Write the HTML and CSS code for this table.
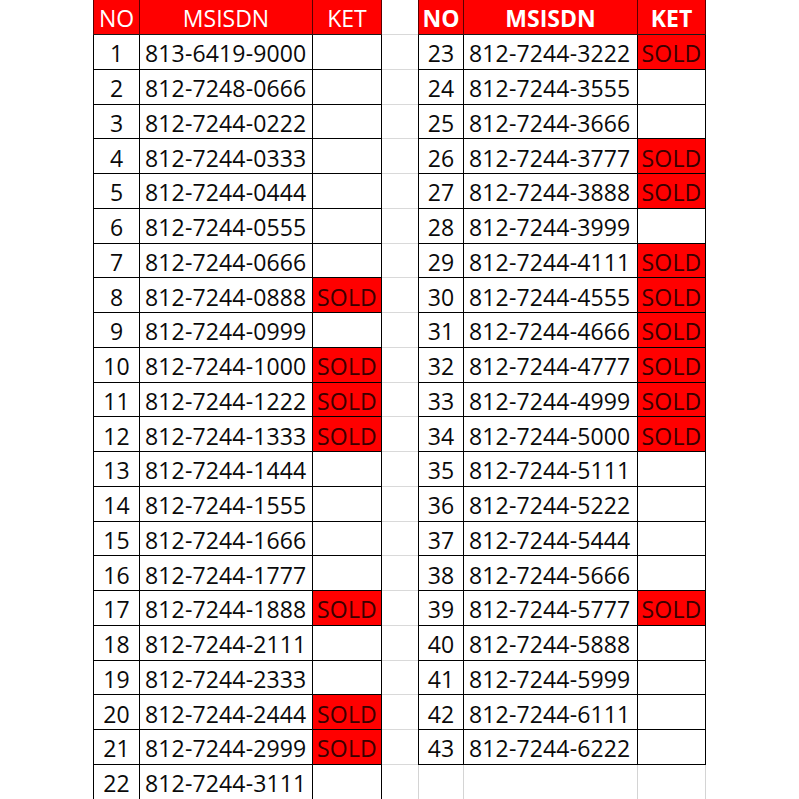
FILE: index.html
```html
<!DOCTYPE html>
<html lang="id">
<head>
<meta charset="utf-8">
<title>MSISDN</title>
<link rel="stylesheet" href="styles.css">
</head>
<body>
<div class="sheet">
  <div class="c hd first no">NO</div><div class="c hd">MSISDN</div><div class="c hd">KET</div><div class="gap"></div><div class="c hd hb first">NO</div><div class="c hd hb">MSISDN</div><div class="c hd hb">KET</div>

  <div class="c first no">1</div><div class="c ms">813-6419-9000</div><div class="c ket"></div><div class="gap"></div><div class="c first no">23</div><div class="c ms">812-7244-3222</div><div class="c ket sold">SOLD</div>
  <div class="c first no">2</div><div class="c ms">812-7248-0666</div><div class="c ket"></div><div class="gap"></div><div class="c first no">24</div><div class="c ms">812-7244-3555</div><div class="c ket"></div>
  <div class="c first no">3</div><div class="c ms">812-7244-0222</div><div class="c ket"></div><div class="gap"></div><div class="c first no">25</div><div class="c ms">812-7244-3666</div><div class="c ket"></div>
  <div class="c first no">4</div><div class="c ms">812-7244-0333</div><div class="c ket"></div><div class="gap"></div><div class="c first no">26</div><div class="c ms">812-7244-3777</div><div class="c ket sold">SOLD</div>
  <div class="c first no">5</div><div class="c ms">812-7244-0444</div><div class="c ket"></div><div class="gap"></div><div class="c first no">27</div><div class="c ms">812-7244-3888</div><div class="c ket sold">SOLD</div>
  <div class="c first no">6</div><div class="c ms">812-7244-0555</div><div class="c ket"></div><div class="gap"></div><div class="c first no">28</div><div class="c ms">812-7244-3999</div><div class="c ket"></div>
  <div class="c first no">7</div><div class="c ms">812-7244-0666</div><div class="c ket"></div><div class="gap"></div><div class="c first no">29</div><div class="c ms">812-7244-4111</div><div class="c ket sold">SOLD</div>
  <div class="c first no">8</div><div class="c ms">812-7244-0888</div><div class="c ket sold">SOLD</div><div class="gap"></div><div class="c first no">30</div><div class="c ms">812-7244-4555</div><div class="c ket sold">SOLD</div>
  <div class="c first no">9</div><div class="c ms">812-7244-0999</div><div class="c ket"></div><div class="gap"></div><div class="c first no">31</div><div class="c ms">812-7244-4666</div><div class="c ket sold">SOLD</div>
  <div class="c first no">10</div><div class="c ms">812-7244-1000</div><div class="c ket sold">SOLD</div><div class="gap"></div><div class="c first no">32</div><div class="c ms">812-7244-4777</div><div class="c ket sold">SOLD</div>
  <div class="c first no">11</div><div class="c ms">812-7244-1222</div><div class="c ket sold">SOLD</div><div class="gap"></div><div class="c first no">33</div><div class="c ms">812-7244-4999</div><div class="c ket sold">SOLD</div>
  <div class="c first no">12</div><div class="c ms">812-7244-1333</div><div class="c ket sold">SOLD</div><div class="gap"></div><div class="c first no">34</div><div class="c ms">812-7244-5000</div><div class="c ket sold">SOLD</div>
  <div class="c first no">13</div><div class="c ms">812-7244-1444</div><div class="c ket"></div><div class="gap"></div><div class="c first no">35</div><div class="c ms">812-7244-5111</div><div class="c ket"></div>
  <div class="c first no">14</div><div class="c ms">812-7244-1555</div><div class="c ket"></div><div class="gap"></div><div class="c first no">36</div><div class="c ms">812-7244-5222</div><div class="c ket"></div>
  <div class="c first no">15</div><div class="c ms">812-7244-1666</div><div class="c ket"></div><div class="gap"></div><div class="c first no">37</div><div class="c ms">812-7244-5444</div><div class="c ket"></div>
  <div class="c first no">16</div><div class="c ms">812-7244-1777</div><div class="c ket"></div><div class="gap"></div><div class="c first no">38</div><div class="c ms">812-7244-5666</div><div class="c ket"></div>
  <div class="c first no">17</div><div class="c ms">812-7244-1888</div><div class="c ket sold">SOLD</div><div class="gap"></div><div class="c first no">39</div><div class="c ms">812-7244-5777</div><div class="c ket sold">SOLD</div>
  <div class="c first no">18</div><div class="c ms">812-7244-2111</div><div class="c ket"></div><div class="gap"></div><div class="c first no">40</div><div class="c ms">812-7244-5888</div><div class="c ket"></div>
  <div class="c first no">19</div><div class="c ms">812-7244-2333</div><div class="c ket"></div><div class="gap"></div><div class="c first no">41</div><div class="c ms">812-7244-5999</div><div class="c ket"></div>
  <div class="c first no">20</div><div class="c ms">812-7244-2444</div><div class="c ket sold">SOLD</div><div class="gap"></div><div class="c first no">42</div><div class="c ms">812-7244-6111</div><div class="c ket"></div>
  <div class="c first no">21</div><div class="c ms">812-7244-2999</div><div class="c ket sold">SOLD</div><div class="gap"></div><div class="c first no">43</div><div class="c ms">812-7244-6222</div><div class="c ket"></div>
  <div class="c first no">22</div><div class="c ms">812-7244-3111</div><div class="c ket"></div><div class="gap"></div><div class="c first empty"></div><div class="c empty"></div><div class="c empty"></div>
</div>
</body>
</html>
```
FILE: styles.css
```css
html, body {
  margin: 0;
  padding: 0;
  background: #ffffff;
}

body {
  width: 799px;
  height: 799px;
  overflow: hidden;
}

.sheet {
  display: grid;
  grid-template-columns: 47px 173px 69px 36px 46px 174px 68px;
  grid-template-rows: 35px repeat(22, 34.75px);
  padding-left: 93px;
  font-family: "Open Sans", "Noto Sans", sans-serif;
  font-size: 23px;
  color: #0a0a0a;
}

.c {
  box-sizing: border-box;
  border-right: 1px solid #000000;
  border-bottom: 1px solid #000000;
  display: flex;
  align-items: center;
  justify-content: center;
  padding-top: 4px;
  white-space: nowrap;
  line-height: 1;
}

.first {
  border-left: 1px solid #000000;
}

.ms {
  justify-content: flex-start;
  padding-left: 5px;
  letter-spacing: 0.15px;
}

.hd {
  background: #ff0000;
  color: #ffffff;
  padding-top: 3px;
  border-right-color: #5a0000;
  border-bottom-color: #1a1a1a;
}

.hd.first {
  border-left-color: #5a0000;
}

.hb {
  font-weight: 700;
}

.sold {
  background: #ff0000;
  color: #3a0000;
  letter-spacing: 0.2px;
}

.gap {
  box-sizing: border-box;
  border-bottom: 1px solid #d9d9d9;
}

.empty {
  border-color: #d4d4d4;
}
```
